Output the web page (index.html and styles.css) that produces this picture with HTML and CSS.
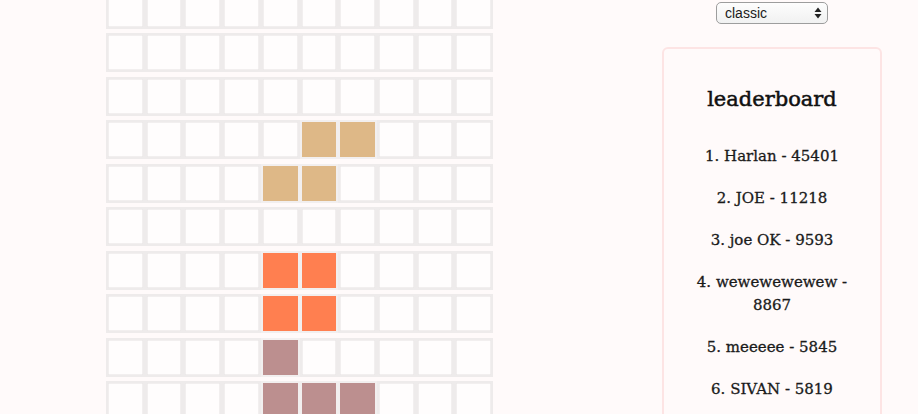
FILE: index.html
```html
<!DOCTYPE html>
<html>
<head>
<meta charset="utf-8">
<title>tetris</title>
<link rel="stylesheet" href="styles.css">
</head>
<body>
<main class="page">
  <section class="board">
    <div class="row"><div class="cell"></div><div class="cell"></div><div class="cell"></div><div class="cell"></div><div class="cell"></div><div class="cell"></div><div class="cell"></div><div class="cell"></div><div class="cell"></div><div class="cell"></div></div>
    <div class="row"><div class="cell"></div><div class="cell"></div><div class="cell"></div><div class="cell"></div><div class="cell"></div><div class="cell"></div><div class="cell"></div><div class="cell"></div><div class="cell"></div><div class="cell"></div></div>
    <div class="row"><div class="cell"></div><div class="cell"></div><div class="cell"></div><div class="cell"></div><div class="cell"></div><div class="cell"></div><div class="cell"></div><div class="cell"></div><div class="cell"></div><div class="cell"></div></div>
    <div class="row"><div class="cell"></div><div class="cell"></div><div class="cell"></div><div class="cell"></div><div class="cell"></div><div class="cell s"></div><div class="cell s"></div><div class="cell"></div><div class="cell"></div><div class="cell"></div></div>
    <div class="row"><div class="cell"></div><div class="cell"></div><div class="cell"></div><div class="cell"></div><div class="cell s"></div><div class="cell s"></div><div class="cell"></div><div class="cell"></div><div class="cell"></div><div class="cell"></div></div>
    <div class="row"><div class="cell"></div><div class="cell"></div><div class="cell"></div><div class="cell"></div><div class="cell"></div><div class="cell"></div><div class="cell"></div><div class="cell"></div><div class="cell"></div><div class="cell"></div></div>
    <div class="row"><div class="cell"></div><div class="cell"></div><div class="cell"></div><div class="cell"></div><div class="cell o"></div><div class="cell o"></div><div class="cell"></div><div class="cell"></div><div class="cell"></div><div class="cell"></div></div>
    <div class="row"><div class="cell"></div><div class="cell"></div><div class="cell"></div><div class="cell"></div><div class="cell o"></div><div class="cell o"></div><div class="cell"></div><div class="cell"></div><div class="cell"></div><div class="cell"></div></div>
    <div class="row"><div class="cell"></div><div class="cell"></div><div class="cell"></div><div class="cell"></div><div class="cell j"></div><div class="cell"></div><div class="cell"></div><div class="cell"></div><div class="cell"></div><div class="cell"></div></div>
    <div class="row"><div class="cell"></div><div class="cell"></div><div class="cell"></div><div class="cell"></div><div class="cell j"></div><div class="cell j"></div><div class="cell j"></div><div class="cell"></div><div class="cell"></div><div class="cell"></div></div>
  </section>
  <aside class="side">
    <div class="select-wrap">
      <select class="mode"><option>classic</option></select>
      <svg class="arrows" width="8" height="12" viewBox="0 0 8 12"><path d="M4 0.5 L7.5 5 H0.5 Z M4 11.5 L7.5 7 H0.5 Z" fill="#222"/></svg>
    </div>
    <div class="card">
      <h2 class="title">leaderboard</h2>
      <p class="entry">1. Harlan - 45401</p>
      <p class="entry">2. JOE - 11218</p>
      <p class="entry">3. joe OK - 9593</p>
      <p class="entry">4. wewewewewew - 8867</p>
      <p class="entry">5. meeeee - 5845</p>
      <p class="entry">6. SIVAN - 5819</p>
    </div>
  </aside>
</main>
</body>
</html>
```

FILE: styles.css
```css
html, body {
  margin: 0;
  padding: 0;
  height: 100%;
  overflow: hidden;
  background: #fffafa;
}

.page {
  display: flex;
  align-items: flex-start;
  font-family: "DejaVu Serif", "Liberation Serif", serif;
  color: #1e1e1e;
}

.board {
  margin-left: 106px;
  margin-top: -10.5px;
  width: 387px;
  display: flex;
  flex-direction: column;
  gap: 4.5px;
}

.row {
  display: flex;
}

.cell {
  flex: 1 1 0;
  height: 39px;
  box-sizing: border-box;
  border: 2px solid #eeebeb;
  background: #fffdfd;
  box-shadow: inset 0 0 0 0.5px #e6e2e2;
}

.cell.s { background: #deb887; box-shadow: none; border-color: #f2efef; }
.cell.o { background: #ff7f50; box-shadow: none; border-color: #f2efef; }
.cell.j { background: #bc8f8f; box-shadow: none; border-color: #f2efef; }

.side {
  margin-left: auto;
  margin-right: 36px;
  width: 220px;
  display: flex;
  flex-direction: column;
  align-items: center;
}

.select-wrap {
  position: relative;
  margin-top: 2px;
}

.mode {
  -webkit-appearance: none;
  appearance: none;
  width: 112px;
  height: 22px;
  box-sizing: border-box;
  border: 1px solid #9d9d9d;
  border-radius: 5px;
  background: linear-gradient(#fdfdfd, #f1f1f1);
  font-family: "Liberation Sans", Arial, sans-serif;
  font-size: 14px;
  color: #1a1a1a;
  padding: 0 0 0 8px;
  line-height: 20px;
  display: block;
}

.arrows {
  position: absolute;
  right: 6px;
  top: 5px;
  pointer-events: none;
}

.card {
  margin-top: 22.5px;
  width: 220px;
  box-sizing: border-box;
  border: 2px solid #fde4e4;
  border-radius: 6px;
  background: #fffafa;
  padding: 1px 20px 10px;
  text-align: center;
}

.title {
  margin: 36px 0 33.5px;
  font-size: 21px;
  line-height: 26px;
  font-weight: normal;
  color: #111;
  -webkit-text-stroke: 0.5px #111;
}

.entry {
  margin: 19px 0;
  font-size: 15px;
  line-height: 23px;
  color: #1a1a1a;
  -webkit-text-stroke: 0.3px #1a1a1a;
}
```
